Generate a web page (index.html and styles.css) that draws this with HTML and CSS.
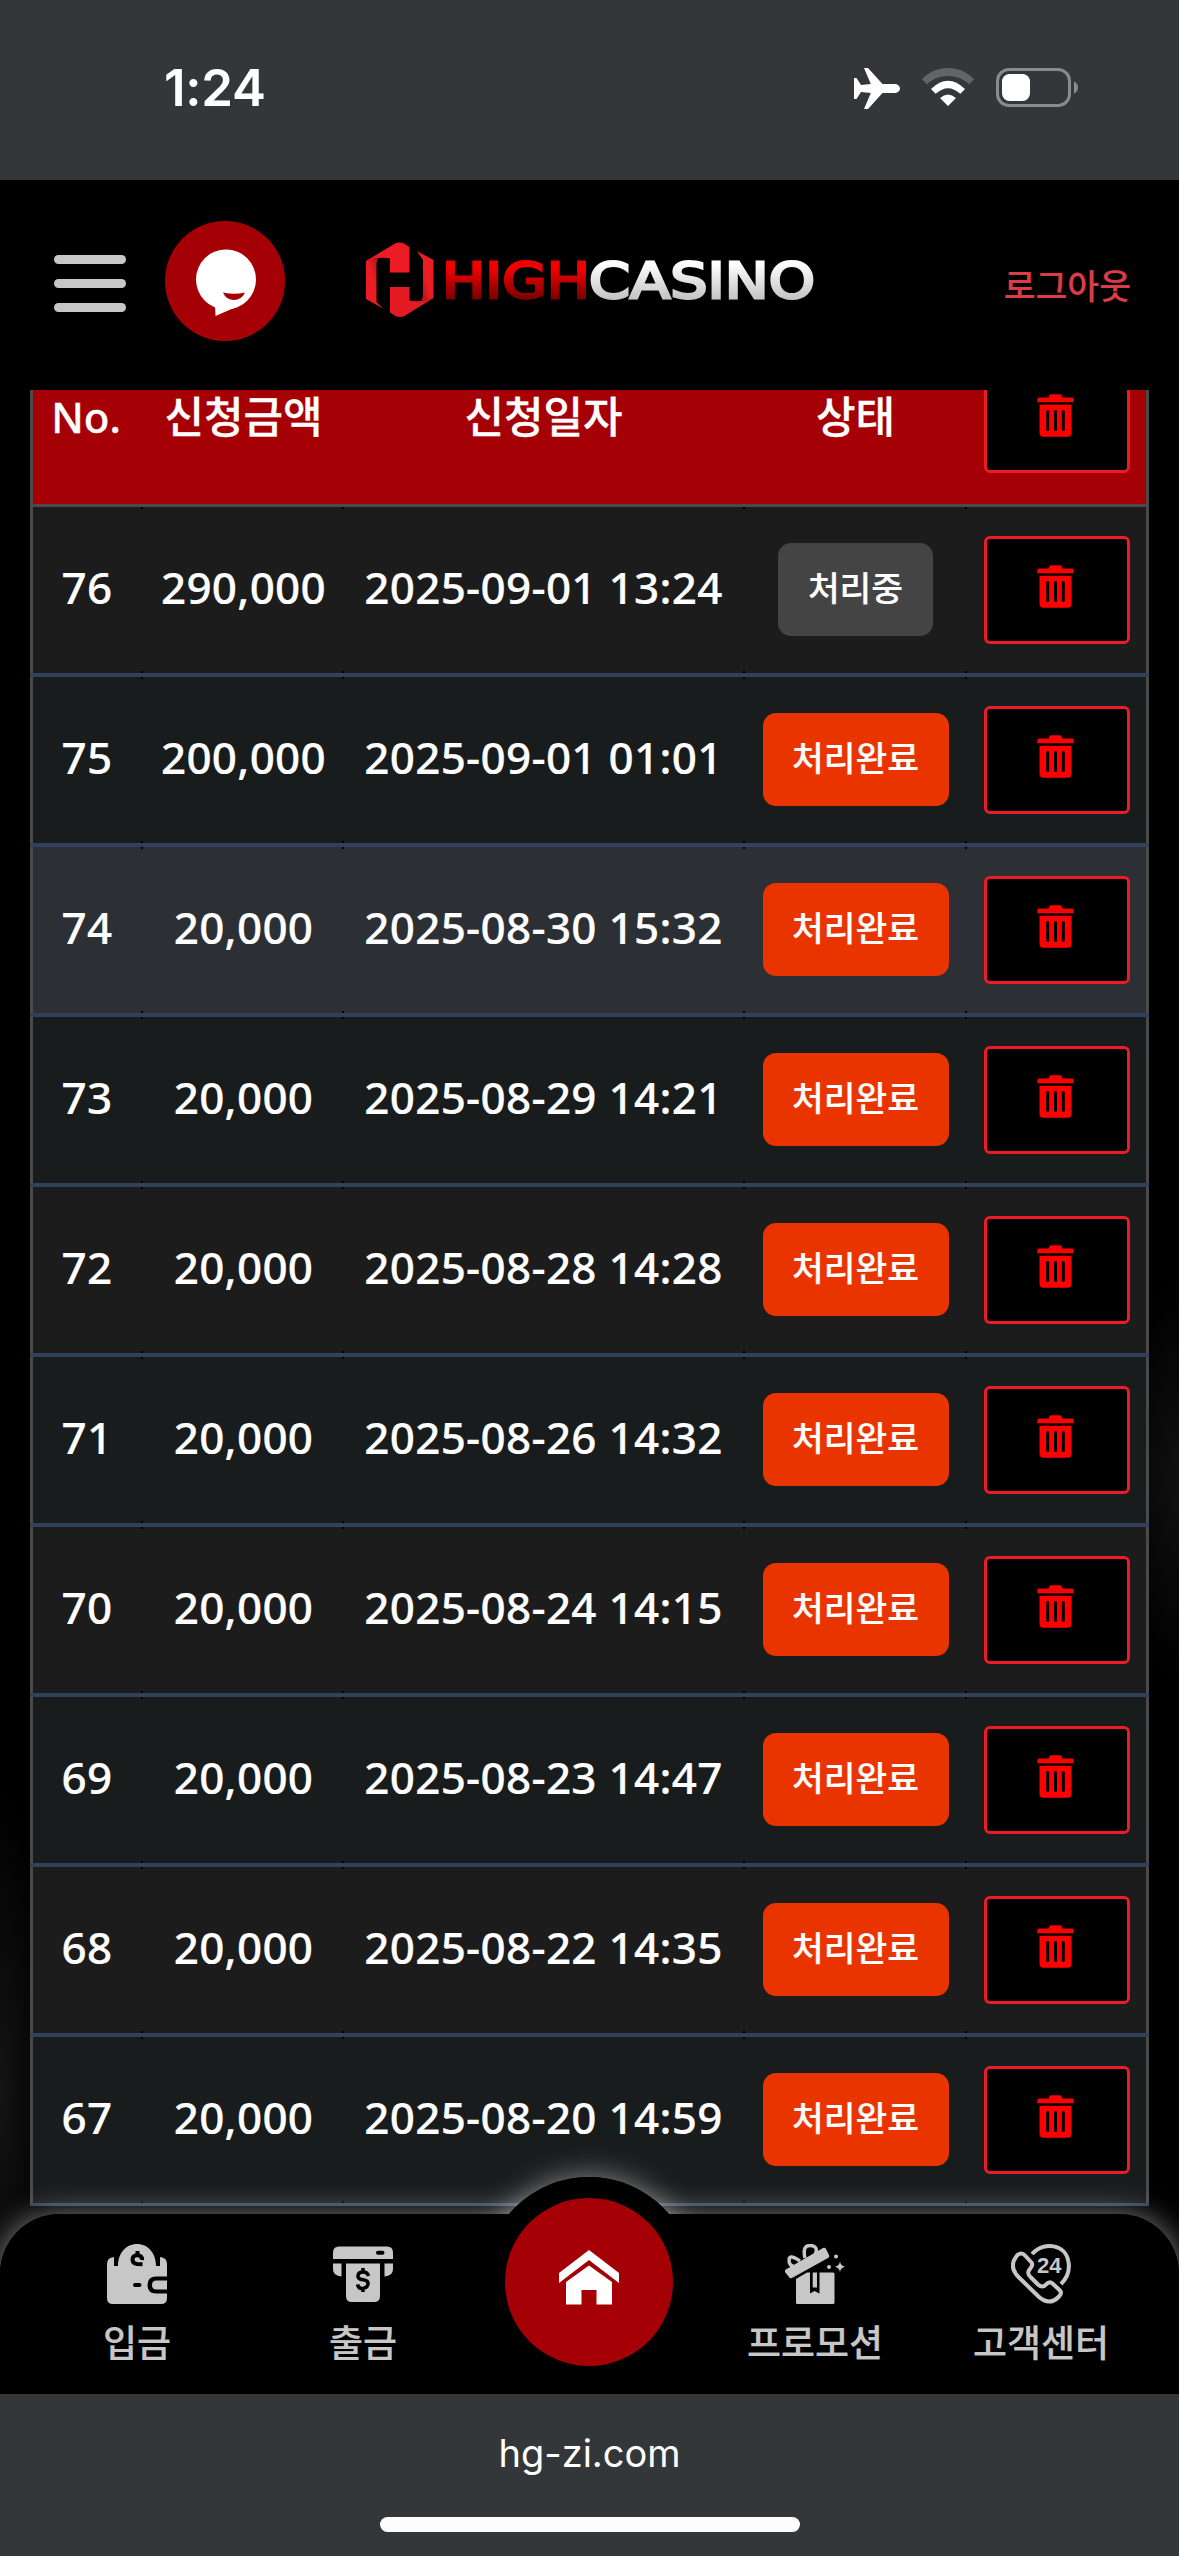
FILE: index.html
```html
<!DOCTYPE html>
<html lang="ko">
<head>
<meta charset="utf-8">
<title>HIGHCASINO</title>
<link rel="stylesheet" href="styles.css">
</head>
<body>
<svg class="defs" width="0" height="0">
  <symbol id="trash" viewBox="0 0 37 43">
    <path d="M2 3.500h9.500l1-2.200Q13 .3 14.200.3h8.600q1.200 0 1.700 1l1 2.200H35q1.700 0 1.700 1.700V8.300H.3V5.200Q.3 3.500 2 3.500z"/>
    <path fill-rule="evenodd" d="M2.500 10.800h32V39q0 3.700-3.700 3.700H6.200Q2.500 42.700 2.500 39zM10.700 16q-1.500 0-1.500 1.500v18q0 1.500 1.500 1.500t1.500-1.500v-18q0-1.500-1.500-1.500zM18.500 16q-1.500 0-1.500 1.500v18q0 1.500 1.500 1.500t1.500-1.500v-18q0-1.500-1.500-1.500zM26.300 16q-1.500 0-1.500 1.500v18q0 1.500 1.500 1.500t1.500-1.500v-18q0-1.500-1.500-1.500z"/>
  </symbol>
</svg>
<div class="phone">
  <div class="status">
    <span class="time">1:24</span>
    <div class="status-icons">
      <svg width="46" height="41" viewBox="0 0 46 41" fill="#fff"><path d="M10 0h4l14.500 16H41c3 0 5 2.500 5 4.500S44 25 41 25H28.500L14 41h-4l6.800-16L7 24l-4.500 7H0V10h2.500L7 17l9.800-1z"/></svg>
      <svg width="52" height="38" viewBox="0 0 52 38"><path d="M0 11.300C14-3.800 38-3.800 52 11.300L47 16.200C36 5.200 16 5.200 5 16.200z" fill="#636465"/><path d="M9 21Q26 4.500 43 21l-4.700 4.800Q26 14.500 13.700 25.800z" fill="#fff"/><path d="M18 30q8-7 16 0l-8 8z" fill="#fff"/></svg>
      <svg width="83" height="40" viewBox="0 0 83 40"><rect x="1.500" y="1.500" width="72" height="36" rx="11.500" fill="none" stroke="#8a8b8c" stroke-width="3"/><rect x="6" y="6" width="28" height="27" rx="7.500" fill="#fff"/><path d="M78 13.500q4 2 4 6t-4 6z" fill="#8a8b8c"/></svg>
    </div>
  </div>

  <header class="top">
    <div class="burger"><i></i><i></i><i></i></div>
    <svg class="chat" width="120" height="120" viewBox="0 0 120 120"><circle cx="60" cy="60" r="60" fill="#a50006"/><circle cx="61" cy="58.500" r="30" fill="#fff"/><path d="M50 84l.5 11L78 83z" fill="#fff"/><path d="M58 71.500q11 2.500 22 0-3.500 7.500-11 7.500-8 0-11-7.500z" fill="#a50006"/></svg>
    <svg class="logo" width="450" height="78" viewBox="0 0 450 78">
      <defs>
        <linearGradient id="red" x1="0" y1="0" x2="0" y2="1"><stop offset="0.300" stop-color="#f20000"/><stop offset="0.900" stop-color="#600"/></linearGradient>
        <linearGradient id="silver" x1="0" y1="0" x2="0" y2="1"><stop offset="0.200" stop-color="#fff"/><stop offset="0.820" stop-color="#c4c4c4"/></linearGradient>
        <linearGradient id="dark" x1="1" y1="0" x2="0" y2="1"><stop offset="0" stop-color="#8c1016"/><stop offset="0.500" stop-color="#ec1c24"/></linearGradient>
        <linearGradient id="dark2" x1="0" y1="1" x2="1" y2="0"><stop offset="0" stop-color="#8c1016"/><stop offset="0.500" stop-color="#ec1c24"/></linearGradient>
      </defs>
      <path d="M0 19L29 1.500Q33.500-.5 38 1.500L43.500 5V30.500H24V16.500Q14 14 0 19z" fill="#ec1c24"/>
      <path d="M0 19Q7 15 12 16.500L10.500 21V60L17 66.500 0 57z" fill="url(#dark)"/>
      <path d="M67.500 56L38.500 74Q34 76 29.500 74L24 70.500V45H43.500V58.500Q54 61 67.500 56z" fill="#e41b23"/>
      <path d="M67.500 56Q60 60 55 58.500L57 54V18L51 9 67.500 18z" fill="url(#dark2)"/>
      <text x="76" y="55.500" textLength="148" lengthAdjust="spacingAndGlyphs" fill="url(#red)" stroke="url(#red)">HIGH</text>
      <text x="223" y="55.500" textLength="226" lengthAdjust="spacingAndGlyphs" fill="url(#silver)" stroke="url(#silver)">CASINO</text>
    </svg>
    <a class="logout">로그아웃</a>
  </header>

  <main class="page">
    <div class="table">
      <div class="row head"><b>No.</b><b>신청금액</b><b>신청일자</b><b>상태</b><b><button><svg><use href="#trash"/></svg></button></b></div>
      <div class="row"><b>76</b><b>290,000</b><b>2025-09-01 13:24</b><b><span class="badge wait">처리중</span></b><b><button><svg><use href="#trash"/></svg></button></b></div>
      <div class="row"><b>75</b><b>200,000</b><b>2025-09-01 01:01</b><b><span class="badge">처리완료</span></b><b><button><svg><use href="#trash"/></svg></button></b></div>
      <div class="row active"><b>74</b><b>20,000</b><b>2025-08-30 15:32</b><b><span class="badge">처리완료</span></b><b><button><svg><use href="#trash"/></svg></button></b></div>
      <div class="row"><b>73</b><b>20,000</b><b>2025-08-29 14:21</b><b><span class="badge">처리완료</span></b><b><button><svg><use href="#trash"/></svg></button></b></div>
      <div class="row"><b>72</b><b>20,000</b><b>2025-08-28 14:28</b><b><span class="badge">처리완료</span></b><b><button><svg><use href="#trash"/></svg></button></b></div>
      <div class="row"><b>71</b><b>20,000</b><b>2025-08-26 14:32</b><b><span class="badge">처리완료</span></b><b><button><svg><use href="#trash"/></svg></button></b></div>
      <div class="row"><b>70</b><b>20,000</b><b>2025-08-24 14:15</b><b><span class="badge">처리완료</span></b><b><button><svg><use href="#trash"/></svg></button></b></div>
      <div class="row"><b>69</b><b>20,000</b><b>2025-08-23 14:47</b><b><span class="badge">처리완료</span></b><b><button><svg><use href="#trash"/></svg></button></b></div>
      <div class="row"><b>68</b><b>20,000</b><b>2025-08-22 14:35</b><b><span class="badge">처리완료</span></b><b><button><svg><use href="#trash"/></svg></button></b></div>
      <div class="row"><b>67</b><b>20,000</b><b>2025-08-20 14:59</b><b><span class="badge">처리완료</span></b><b><button><svg><use href="#trash"/></svg></button></b></div>
    </div>

    <div class="dock">
      <div class="halo"></div>
      <nav class="nav">
        <a><svg viewBox="0 0 60 60"><path fill-rule="evenodd" d="M0 20q0-6.500 7-7V22h4C11 9 19 0 30 0s19 9 19 22h4V13q7 .5 7 7V32.500H49q-8.500 0-8.500 8.500t8.500 8.500H60V54q0 6-6 6H6q-6 0-6-6zM28 39q-2 0-2 2t2 2h4.500q2 0 2-2t-2-2z"/><path d="M60 36.500H49.500q-4.500 0-4.500 4.500t4.500 4.500H60z"/><path d="M35 16q.5-4-4.500-5-5 .5-5 4.500t4.500 4.500l5.500.3M30.500 7v3" fill="none" stroke="#000" stroke-width="4"/></svg>입금</a>
        <a><svg viewBox="0 0 60 60"><path fill-rule="evenodd" d="M0 15V8.500Q0 2.500 6 2.500H54q6 0 6 6V15zM45 6.800q-2 0-2 2t2 2h4.500q2 0 2-2t-2-2z"/><path d="M0 19.500H8.500V32.500Q0 32 0 25zM60 19.500H51.500V32.500Q60 32 60 25zM13 19.500H47V52q0 6-6 6H19q-6 0-6-6z"/><path d="M35.500 32q-1-4-5.500-4t-5 3.500 5 4.300 5 4.300-5 4.300-5.500-4M30 24v4M30 44v4" fill="none" stroke="#000" stroke-width="3.500"/></svg>출금</a>
        <a class="home"><svg viewBox="0 0 60 55"><path d="M0 23L30 0 60 23V33L30 10 0 33z"/><path d="M7 32L30 15.500 53 32V54.500H37.500V40h-15V54.500H7z"/></svg></a>
        <a><svg viewBox="0 0 60 60"><path d="M0 26L38 4q2-1 3 1l3 6q.8 2-1 3L7 34q-2 1-3-1L0 28q-.5-1.500 0-2z"/><path d="M20 14Q17 1 25.500 1.500T30 11M15 17Q2 8 4.500 19q1 3 4 3" fill="none" stroke="#c7c7c7" stroke-width="3.500"/><path d="M11 35L22 28.500h3V49.500l4.500-2.500 5 2.500V28.500H48q1.500 0 1.500 1.500V58.500Q49.500 60 48 60H12.500Q11 60 11 58.500z"/><path d="M27.700 28.500H32V43.500H27.700zM55 17.500q.8 4.200 5 5.300-4.200 1-5 5.300-.8-4.300-5-5.300 4.200-1 5-5.300z"/><circle cx="51" cy="12.500" r="2"/><circle cx="44" cy="23" r="2"/></svg>프로모션</a>
        <a><svg viewBox="0 0 60 60"><g fill="none" stroke="#c7c7c7" stroke-width="4" stroke-linejoin="round"><path d="M21 10C33-3 55 0 57.500 18 59 27 56 34 50 40"/><path d="M6 11.500q4.500-4 8 0l6.500 7q2 2.500-1.500 6.500-4 4 1 8.500l7 7q4.500 4 8 0 3.500-3.500 6.500-1l7 6.500q3 3-.5 6.500-9.500 10-20.500 0L7.500 33Q-3 22.500 6 11.500z"/></g><text x="26" y="29" class="n24">24</text></svg>고객센터</a>
      </nav>
    </div>
  </main>

  <footer class="address"><span>hg-zi.com</span><i></i></footer>
</div>
</body>
</html>
```
FILE: styles.css
```css
* { box-sizing: border-box; }
body { margin: 0; background: #000; color: #fff; font-family: "Noto Sans", "Noto Sans CJK KR", sans-serif; }
.defs { position: absolute; }
.phone { width: 1179px; height: 2556px; display: flex; flex-direction: column; overflow: hidden; }

.status { height: 180px; flex: none; background: #34373a; display: flex; justify-content: space-between; padding: 67px 100px 0 164px; }
.time { font: 600 51px/41px Inter, sans-serif; letter-spacing: -0.3px; }
.status-icons { display: flex; gap: 22px; align-items: flex-start; padding-top: 1px; }

.top { height: 210px; flex: none; background: #000; display: flex; align-items: center; padding: 0 48px 8px 54px; }
.burger { width: 72px; display: flex; flex-direction: column; gap: 15px; margin-top: 5px; }
.burger i { height: 9px; border-radius: 5px; background: #c7c7c7; }
.chat { margin-left: 39px; }
.logo { margin-left: 81px; overflow: visible; }
.logo text { font: 50px "DejaVu Sans", sans-serif; stroke-width: 2.8px; }
.logout { margin-left: auto; margin-top: 5px; color: #dc3c45; font: 500 34.600px/50px "Noto Sans CJK KR", sans-serif; -webkit-text-stroke: 0.2px; }

.page { position: relative; height: 2004px; flex: none; overflow: hidden; padding: 0 30px; background: radial-gradient(50px 300px at 0 1700px, #141414, transparent), radial-gradient(60px 200px at 1179px 1090px, #111, transparent), #000; }
.table { margin-top: -56px; }
.row { display: grid; grid-template-columns: 110px 201px 401px 222px 179px; height: 170px; padding: 0 3px; background: #1c1c1c; border-bottom: 4px solid #31405b; box-shadow: inset 3px 0 #4a4a4a, inset -3px 0 #4a4a4a; }
.row:nth-child(odd) { background: #181c1d; }
.row.active { background: #2c3035; }
.row.head { height: 173px; background: #a50006; border-bottom: 3px solid #4a4a4a; }
.row:last-child { height: 169px; border-bottom-width: 3px; }
.row > b { display: flex; align-items: center; justify-content: center; font-weight: 500; font-size: 44px; letter-spacing: 0.300px; line-height: 60px; white-space: nowrap; padding-bottom: 6px; -webkit-text-stroke: 0.2px; }
.row > b:nth-child(3) { padding-right: 2px; }
.row > b:nth-child(4) { padding: 0 1px 1px 0; }
.row > b:first-child { padding-right: 2px; }
.row > b:last-child { padding-bottom: 0; }
.row:not(.head) > b:not(:last-child) { background: linear-gradient(#000, #000) right top / 2px 2px no-repeat, linear-gradient(#000, #000) right bottom / 2px 2px no-repeat; }
.row.head > b { font-size: 43px; letter-spacing: 0; padding-bottom: 5px; -webkit-text-stroke: 0.3px; }
.row.head > b:last-child { padding-bottom: 0; }
.row.head > b:first-child { padding-right: 4px; font-size: 42px; line-height: 44px; -webkit-text-stroke: 0.3px; }
.badge { width: 186px; height: 93px; padding-bottom: 3px; border-radius: 13px; background: #e93400; display: flex; align-items: center; justify-content: center; font-size: 34.500px; letter-spacing: 0; -webkit-text-stroke: 0.200px; }
.badge.wait { width: 155px; background: #444; }
button { width: 146px; height: 108px; padding: 0 2px 7px 0; border: 3px solid #ed1c24; border-radius: 6px; background: #000; display: flex; align-items: center; justify-content: center; }
button svg { width: 37px; height: 43px; fill: #f00; }

.dock { position: absolute; left: 0; right: 0; bottom: 0; height: 180px; border-radius: 60px 60px 0 0; background: #000; box-shadow: 0 0 30px rgba(255, 255, 255, 0.5); }
.halo { position: absolute; left: 484px; top: -37px; width: 210px; height: 210px; border-radius: 50%; background: #000; box-shadow: 0 0 30px rgba(255, 255, 255, 0.5); }
.nav { position: relative; height: 180px; padding: 0 24px; display: grid; grid-template-columns: repeat(5, 226px); background: #000; border-radius: 60px 60px 0 0; }
.nav a { display: flex; flex-direction: column; align-items: center; padding-top: 30px; gap: 10px; color: #c7c7c7; font: 500 37px/54px "Noto Sans CJK KR", sans-serif; -webkit-text-stroke: 0.2px; }
.nav svg { width: 60px; height: 60px; fill: #c7c7c7; }
.n24 { font: bold 22px "Liberation Sans", sans-serif; }
.nav .home { width: 168px; height: 168px; margin: -16px auto 0; border-radius: 50%; background: #a50006; padding: 52px 0 0; box-shadow: 0 0 0 21px #000; }
.nav .home svg { width: 60px; height: 55px; fill: #fff; }

.address { flex: 1; background: #34373a; display: flex; flex-direction: column; align-items: center; padding-top: 35px; font: 400 38px/48px Inter, sans-serif; }
.address i { width: 420px; height: 15px; margin-top: 40px; border-radius: 8px; background: #fdfdfd; }
```
